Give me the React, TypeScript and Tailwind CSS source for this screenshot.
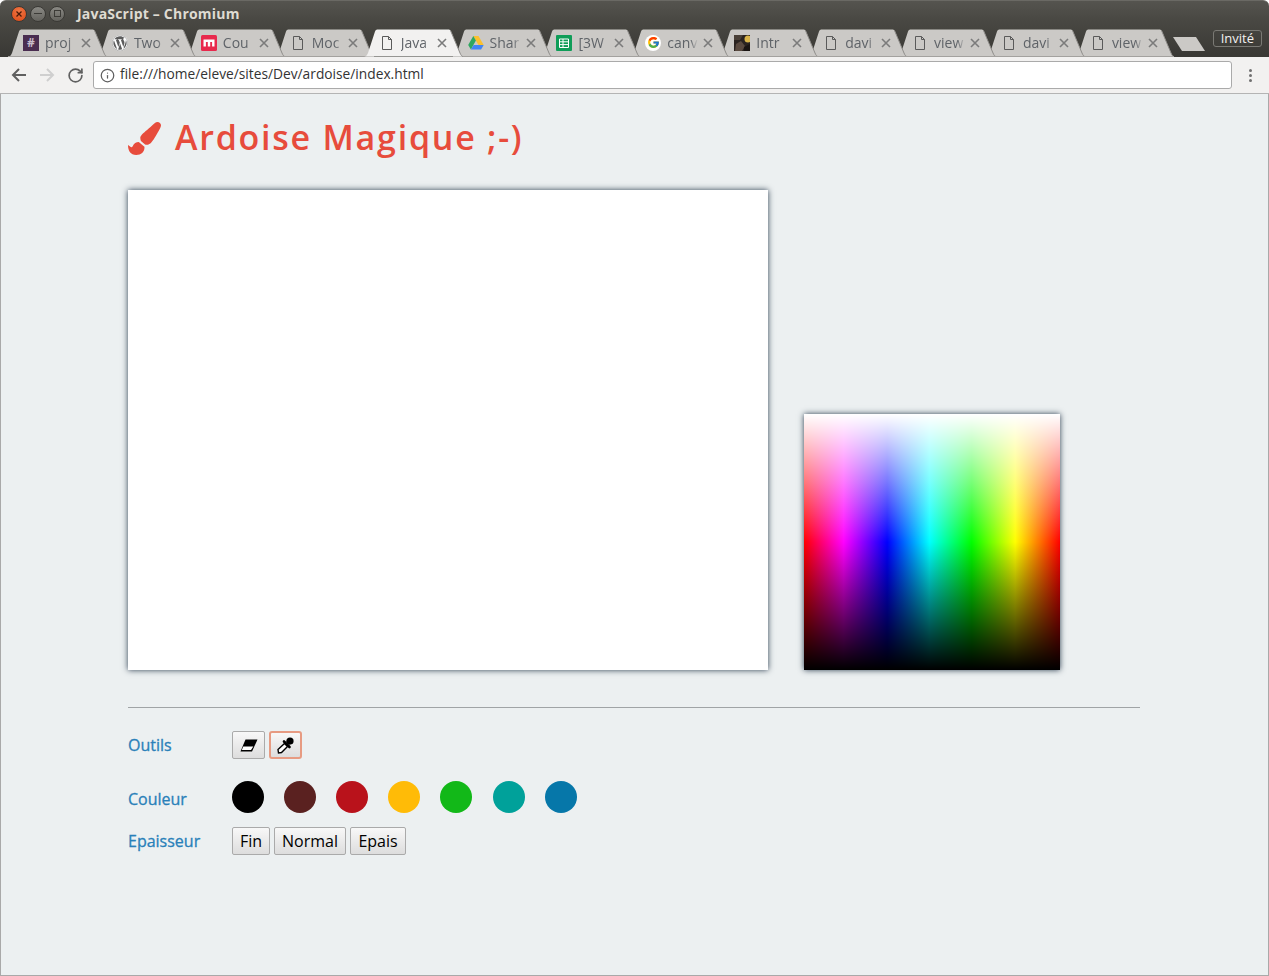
import { FaPaintBrush, FaWordpress } from "react-icons/fa"
import { FcGoogle } from "react-icons/fc"
import { Info, RotateCw } from "lucide-react"

function DocIcon() {
  return (
    <svg width="16" height="16" viewBox="0 0 16 16" fill="none" stroke="#5a5a5a" strokeWidth="1">
      <path d="M3.5 1.500h6l3 3v10h-9z M9.500 1.500v3h3" />
    </svg>
  )
}

function SlackIcon() {
  return (
    <div className="w-4 h-4 bg-[#4a2d50] flex items-center justify-center text-[12px] leading-none font-bold text-[#c9bccb]">#</div>
  )
}

function WpIcon() {
  return (
    <div className="w-4 h-4 rounded-full bg-white flex items-center justify-center">
      <FaWordpress size={16} color="#5c5c5c" />
    </div>
  )
}

function MiroIcon() {
  return (
    <svg width="16" height="16" viewBox="0 0 16 16">
      <rect width="16" height="16" rx="1.500" fill="#e8294d" />
      <path d="M2.500 4.500h11v7h-2.400V7h-1.900v4.500H6.800V7H4.900v4.500H2.500z" fill="#fff" />
    </svg>
  )
}

function DriveIcon() {
  return (
    <svg width="16" height="16" viewBox="0 0 16 16">
      <path d="M5.300 1h5.200l5.200 9h-5.200z" fill="#fbc02d" />
      <path d="M5.300 1l2.600 4.600L2.900 14.500.2 10z" fill="#2fa760" />
      <path d="M5.600 10h10.100l-2.600 4.500H2.900z" fill="#4285f4" />
    </svg>
  )
}

function SheetsIcon() {
  return (
    <svg width="16" height="16" viewBox="0 0 16 16">
      <rect width="16" height="16" rx="1" fill="#0f9d58" />
      <path d="M3.500 4h9v8.500h-9z M3.500 6.800h9 M3.500 9.600h9 M7 4v8.500" fill="none" stroke="#fff" strokeWidth="1" />
    </svg>
  )
}

function GoogleIcon() {
  return (
    <div className="w-4 h-4 rounded-full bg-white flex items-center justify-center">
      <FcGoogle size={13} />
    </div>
  )
}

function PhotoIcon() {
  return (
    <svg width="16" height="16" viewBox="0 0 16 16">
      <rect width="16" height="16" fill="#2a2320" />
      <path d="M0 0h9l-3 5H0z" fill="#4a4038" />
      <circle cx="14" cy="4" r="3.500" fill="#d9b44a" />
      <path d="M2 9l5-3 4 5-3 5H1z" fill="#5a4a40" />
      <path d="M10 12l6-3v7h-6z" fill="#1a1412" />
    </svg>
  )
}

const tabs = [
  { title: "proj", icon: <SlackIcon /> },
  { title: "Two", icon: <WpIcon /> },
  { title: "Cou", icon: <MiroIcon /> },
  { title: "Moc", icon: <DocIcon /> },
  { title: "Java", icon: <DocIcon />, active: true },
  { title: "Shar", icon: <DriveIcon /> },
  { title: "[3W", icon: <SheetsIcon /> },
  { title: "canv", icon: <GoogleIcon /> },
  { title: "Intr", icon: <PhotoIcon /> },
  { title: "davi", icon: <DocIcon /> },
  { title: "view", icon: <DocIcon /> },
  { title: "davi", icon: <DocIcon /> },
  { title: "view", icon: <DocIcon /> },
]

const couleurs = ["bg-[#000000]", "bg-[#5a2120]", "bg-[#b9121b]", "bg-[#ffbb07]", "bg-[#12b818]", "bg-[#00a19a]", "bg-[#0677a9]"]

function Tab({ title, icon, active, z }: { title: string; icon: React.ReactNode; active?: boolean; z: number }) {
  return (
    <div className="relative w-[99px] h-[28px] -ml-[10.1px] first:ml-0 flex items-center pl-[15px] pb-[1px]" style={{ zIndex: active ? 50 : z }}>
      <svg className="absolute inset-0" width="99" height="28" viewBox="0 0 99 28">
        <path
          d="M0 27.500C2 27.500 3 26.500 4 24L11 2.500C11.500 1 12.500 0.500 14 0.500H84C85.500 0.500 86.500 1 87 2.500L96 24C97 26.500 98 27.500 99 27.500Z"
          fill={active ? "#f2f1f0" : "#cbc9c6"}
        />
        <path d="M86.500 1.500L96 24C97 26.500 98 27.500 99 27.500" fill="none" stroke="#8f8d8a" strokeWidth="1" />
        {!active && <path d="M0 27.500H99" stroke="#a3a19e" strokeWidth="1" />}
      </svg>
      <div className="relative w-4 h-4 shrink-0">{icon}</div>
      <div className="relative ml-[6px] w-[31px] overflow-hidden whitespace-nowrap text-[14px] leading-[18px] text-[#5f6368] [mask-image:linear-gradient(to_right,black_75%,transparent)]">
        {title}
      </div>
      <svg className="relative ml-[5px] shrink-0" width="10" height="10" viewBox="0 0 10 10" stroke="#7b7b7b" strokeWidth="1.600">
        <path d="M1 1l8 8M9 1l-8 8" />
      </svg>
    </div>
  )
}

function BrowserChrome() {
  return (
    <>
      <div className="h-[57px] bg-[linear-gradient(to_bottom,#55544f,#4a4944_30%,#393834)] border-t border-[#6a6964] rounded-t-[6px]">
        <div className="h-[28px] flex items-center pl-[11px] pb-[3px]">
          <div className="w-[16px] h-[16px] rounded-full bg-[radial-gradient(circle_at_50%_30%,#f07746,#dd4814)] border border-[#3a3935] flex items-center justify-center">
            <svg width="8" height="8" viewBox="0 0 8 8" stroke="#4a1a08" strokeWidth="1.300"><path d="M1.500 1.500l5 5M6.500 1.500l-5 5" /></svg>
          </div>
          <div className="ml-[3px] w-[16px] h-[16px] rounded-full bg-[linear-gradient(to_bottom,#8a8984,#64635e)] border border-[#3a3935] flex items-center justify-center">
            <div className="w-[8px] h-[1.500px] bg-[#3c3b37]" />
          </div>
          <div className="ml-[3px] w-[16px] h-[16px] rounded-full bg-[linear-gradient(to_bottom,#8a8984,#64635e)] border border-[#3a3935] flex items-center justify-center">
            <div className="w-[7px] h-[7px] border border-[#3c3b37]" />
          </div>
          <span className="ml-[12px] text-[14px] font-bold text-[#dfdbd2] tracking-[0.2px]">JavaScript – Chromium</span>
        </div>
        <div className="h-[28px] flex pl-[8px]">
          {tabs.map((t, i) => (
            <Tab key={i} title={t.title} icon={t.icon} active={t.active} z={20 - i} />
          ))}
          <svg className="-ml-[2px] mt-[7px] shrink-0" width="34" height="16" viewBox="0 0 34 16">
            <path d="M1 1H24L33 15H10Z" fill="#cbc9c6" />
          </svg>
          <div className="ml-[7px] mt-[1px] w-[49px] h-[17px] border border-[#7a7974] rounded-[3px] flex items-center justify-center text-[13px] leading-none text-[#f2f1f0]">
            Invité
          </div>
        </div>
      </div>
      <div className="h-[37px] bg-[#f2f1f0] border-b border-[#b4b4b4] flex items-center">
        <svg className="ml-[11px] shrink-0" width="16" height="16" viewBox="0 0 16 16" fill="none" stroke="#606060" strokeWidth="2">
          <path d="M15 8H2M8 2L2 8l6 6" />
        </svg>
        <svg className="ml-[12px] shrink-0" width="16" height="16" viewBox="0 0 16 16" fill="none" stroke="#cfcfcf" strokeWidth="2">
          <path d="M1 8h13M8 2l6 6-6 6" />
        </svg>
        <RotateCw className="ml-[12px] shrink-0" size={17} color="#606060" strokeWidth={2.400} />
        <div className="ml-[9px] w-[1139px] h-[28px] bg-white border border-[#aaaaaa] rounded-[3px] flex items-center pl-[6px]">
          <Info size={15} color="#5f5f5f" strokeWidth={2} />
          <span className="ml-[5px] pb-[1px] text-[13.75px] text-[#333]">file:///home/eleve/sites/Dev/ardoise/index.html</span>
        </div>
        <div className="ml-[17px] flex flex-col gap-[2px]">
          <div className="w-[3px] h-[3px] rounded-full bg-[#707070]" />
          <div className="w-[3px] h-[3px] rounded-full bg-[#707070]" />
          <div className="w-[3px] h-[3px] rounded-full bg-[#707070]" />
        </div>
      </div>
    </>
  )
}

const btn = "h-[28px] border border-[#aaaaaa] rounded-[2px] bg-[linear-gradient(to_bottom,#f8f8f8,#dddddd)] text-black flex items-center justify-center"
const label = "w-[104px] text-[16px] text-[#2980b9] [-webkit-text-stroke:0.3px_#2980b9]"

export default function App() {
  return (
    <div className="h-[976px] bg-white [font-family:'Open_Sans','Noto_Sans',sans-serif]">
      <BrowserChrome />
      <div className="h-[882px] bg-[#ecf0f1] border-x border-b border-[#a9a9a9] pl-[127px]">
        <h1 className="pt-[19px] h-[96px] flex items-start text-[34px] leading-[48px] font-semibold tracking-[1.750px] text-[#e74c3c]">
          <FaPaintBrush size={33} className="mt-[9px]" />
          <span className="ml-[14px]">Ardoise Magique ;-)</span>
        </h1>
        <div className="flex items-end gap-[36px]">
          <div className="w-[640px] h-[480px] bg-white shadow-[0_0_6px_#2c3e50]" />
          <div className="w-[256px] h-[256px] shadow-[0_0_6px_#2c3e50] bg-[linear-gradient(to_bottom,#ffffff,rgba(255,255,255,0)_50%,rgba(0,0,0,0)_50%,#000000),linear-gradient(to_right,#ff0000,#ff00ff_15.500%,#0000ff_32.500%,#00ffff_49%,#00ff00_65.500%,#ffff00_82.500%,#ff0000)]" />
        </div>
        <div className="mt-[37px] w-[1012px] h-[1px] bg-[#a0a4a6]" />

        <div className="mt-[23px] flex items-center">
          <div className={label}>Outils</div>
          <div className="flex gap-[4px]">
            <button className={btn + " w-[33px]"}>
              <svg width="18" height="13" viewBox="0 0 18 13">
                <path d="M5.500 0.500H17.500L12 12.500H0.500z" fill="#000" />
                <path d="M3.300 7.500H13.300L11 11H1.800z" fill="#fff" />
              </svg>
            </button>
            <button className="h-[28px] w-[33px] border-2 border-[#e79b82] rounded-[3px] bg-[linear-gradient(to_bottom,#f8f8f8,#dddddd)] flex items-center justify-center">
              <svg width="17" height="17" viewBox="0 0 17 17">
                <path d="M7.500 6.500L10.500 9.500 4.500 15.500 1.500 16 1 12.500z" fill="#fff" stroke="#000" strokeWidth="1.400" />
                <path d="M7 4.500L12.500 10" stroke="#000" strokeWidth="2.600" strokeLinecap="round" />
                <circle cx="13" cy="4" r="3.600" fill="#000" />
                <path d="M9 4l4 4 1-3-2-2z" fill="#000" />
              </svg>
            </button>
          </div>
        </div>

        <div className="mt-[22px] flex items-center">
          <div className={label + " pt-[4px]"}>Couleur</div>
          <div className="flex gap-[20.12px]">
            {couleurs.map((c) => (
              <div key={c} className={"w-8 h-8 rounded-full " + c} />
            ))}
          </div>
        </div>

        <div className="mt-[14px] flex items-center">
          <div className={label}>Epaisseur</div>
          <div className="flex gap-[4px] text-[16px]">
            <button className={btn + " w-[38px]"}>Fin</button>
            <button className={btn + " w-[72px]"}>Normal</button>
            <button className={btn + " w-[56px]"}>Epais</button>
          </div>
        </div>
      </div>
    </div>
  )
}
